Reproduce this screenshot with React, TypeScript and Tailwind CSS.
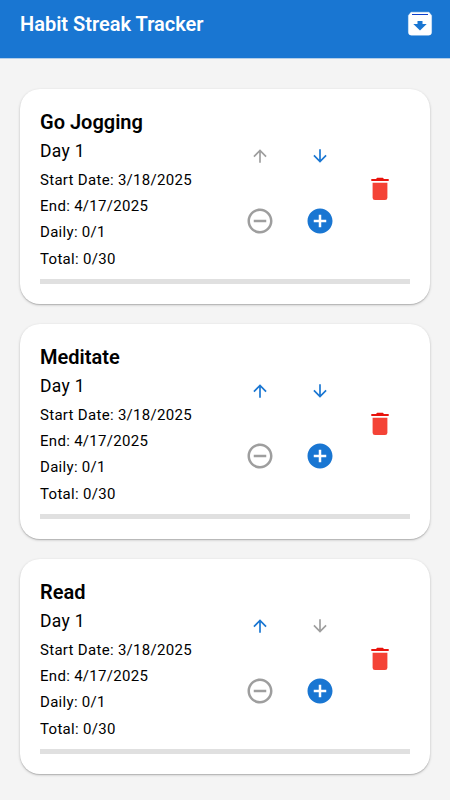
import { MdAddCircle, MdArrowDownward, MdArrowUpward, MdRemoveCircleOutline } from "react-icons/md";

interface Habit {
  name: string;
  day: number;
  start: string;
  end: string;
  daily: string;
  total: string;
}

const habits: Habit[] = [
  { name: "Go Jogging", day: 1, start: "3/18/2025", end: "4/17/2025", daily: "0/1", total: "0/30" },
  { name: "Meditate", day: 1, start: "3/18/2025", end: "4/17/2025", daily: "0/1", total: "0/30" },
  { name: "Read", day: 1, start: "3/18/2025", end: "4/17/2025", daily: "0/1", total: "0/30" },
];

function ArchiveIcon() {
  return (
    <svg width="30" height="30" viewBox="0 0 30 30">
      <path d="M6 3.2h18l2.6 3.2v16.8a3 3 0 0 1-3 3H6.4a3 3 0 0 1-3-3V6.4z" fill="#fff" stroke="#fff" strokeWidth="0.4" strokeLinejoin="round" />
      <rect x="7" y="5" width="16" height="1" fill="#0d3fcb" />
      <path d="M15 21.5 8.3 15h4.2v-3h5v3h4.2z" fill="#1976d2" />
    </svg>
  );
}

function TrashIcon() {
  return (
    <svg width="30" height="30" viewBox="0 0 30 30">
      <path d="M6.3 5H11l1.2-1.2h5.6L19 5h4.7v2H6.3z" fill="#e8130c" />
      <path d="M7.6 8.8h14.8v14.9a2.4 2.4 0 0 1-2.4 2.4H10a2.4 2.4 0 0 1-2.4-2.4z" fill="#f44336" />
    </svg>
  );
}

interface HabitCardProps {
  habit: Habit;
  isFirst: boolean;
  isLast: boolean;
}

function HabitCard({ habit, isFirst, isLast }: HabitCardProps) {
  return (
    <div className="h-[215px] rounded-[20px] bg-white px-5 pt-5 shadow-[0_1px_3px_rgba(0,0,0,0.2),0_1px_1px_rgba(0,0,0,0.14)]">
      <div className="flex h-[162px]">
        <div className="w-[190px] whitespace-nowrap text-black">
          <h2 className="text-xl leading-[27px] font-semibold">{habit.name}</h2>
          <p className="mt-[3px] mb-1 text-[17.5px] leading-6 tracking-[0.3px]">Day {habit.day}</p>
          <div className="text-[15px] leading-[26.2px] tracking-[0.3px]">
            <p>Start Date: {habit.start}</p>
            <p>End: {habit.end}</p>
            <p>Daily: {habit.daily}</p>
            <p>Total: {habit.total}</p>
          </div>
        </div>
        <div className="mt-3.5 grid h-[130px] w-[120px] shrink-0 grid-cols-2 grid-rows-2 place-items-center">
          <button disabled={isFirst} className="text-[#1976d2] disabled:text-[#9e9e9e]">
            <MdArrowUpward size={20} />
          </button>
          <button disabled={isLast} className="text-[#1976d2] disabled:text-[#9e9e9e]">
            <MdArrowDownward size={20} />
          </button>
          <button className="text-[#9e9e9e]">
            <MdRemoveCircleOutline size={30} />
          </button>
          <button className="text-[#1976d2]">
            <MdAddCircle size={30} />
          </button>
        </div>
        <button className="mt-[65px] flex h-[30px] w-[60px] justify-center">
          <TrashIcon />
        </button>
      </div>
      <div className="mt-2 h-[5px] bg-[#e0e0e0]" />
    </div>
  );
}

export default function App() {
  return (
    <div className="h-[800px] w-[450px] overflow-hidden bg-[#f4f4f4] font-['Roboto',sans-serif]">
      <header className="flex h-[58px] items-start justify-between bg-[#1976d2] px-5 text-white shadow-[0_1px_0_rgba(25,118,210,0.3)]">
        <h1 className="mt-2.5 text-xl leading-7 font-semibold">Habit Streak Tracker</h1>
        <button className="mt-[9px] -mr-[5px]">
          <ArchiveIcon />
        </button>
      </header>
      <main className="flex flex-col gap-5 px-5 pt-[31px]">
        {habits.map((habit, i) => (
          <HabitCard key={habit.name} habit={habit} isFirst={i === 0} isLast={i === habits.length - 1} />
        ))}
      </main>
    </div>
  );
}
